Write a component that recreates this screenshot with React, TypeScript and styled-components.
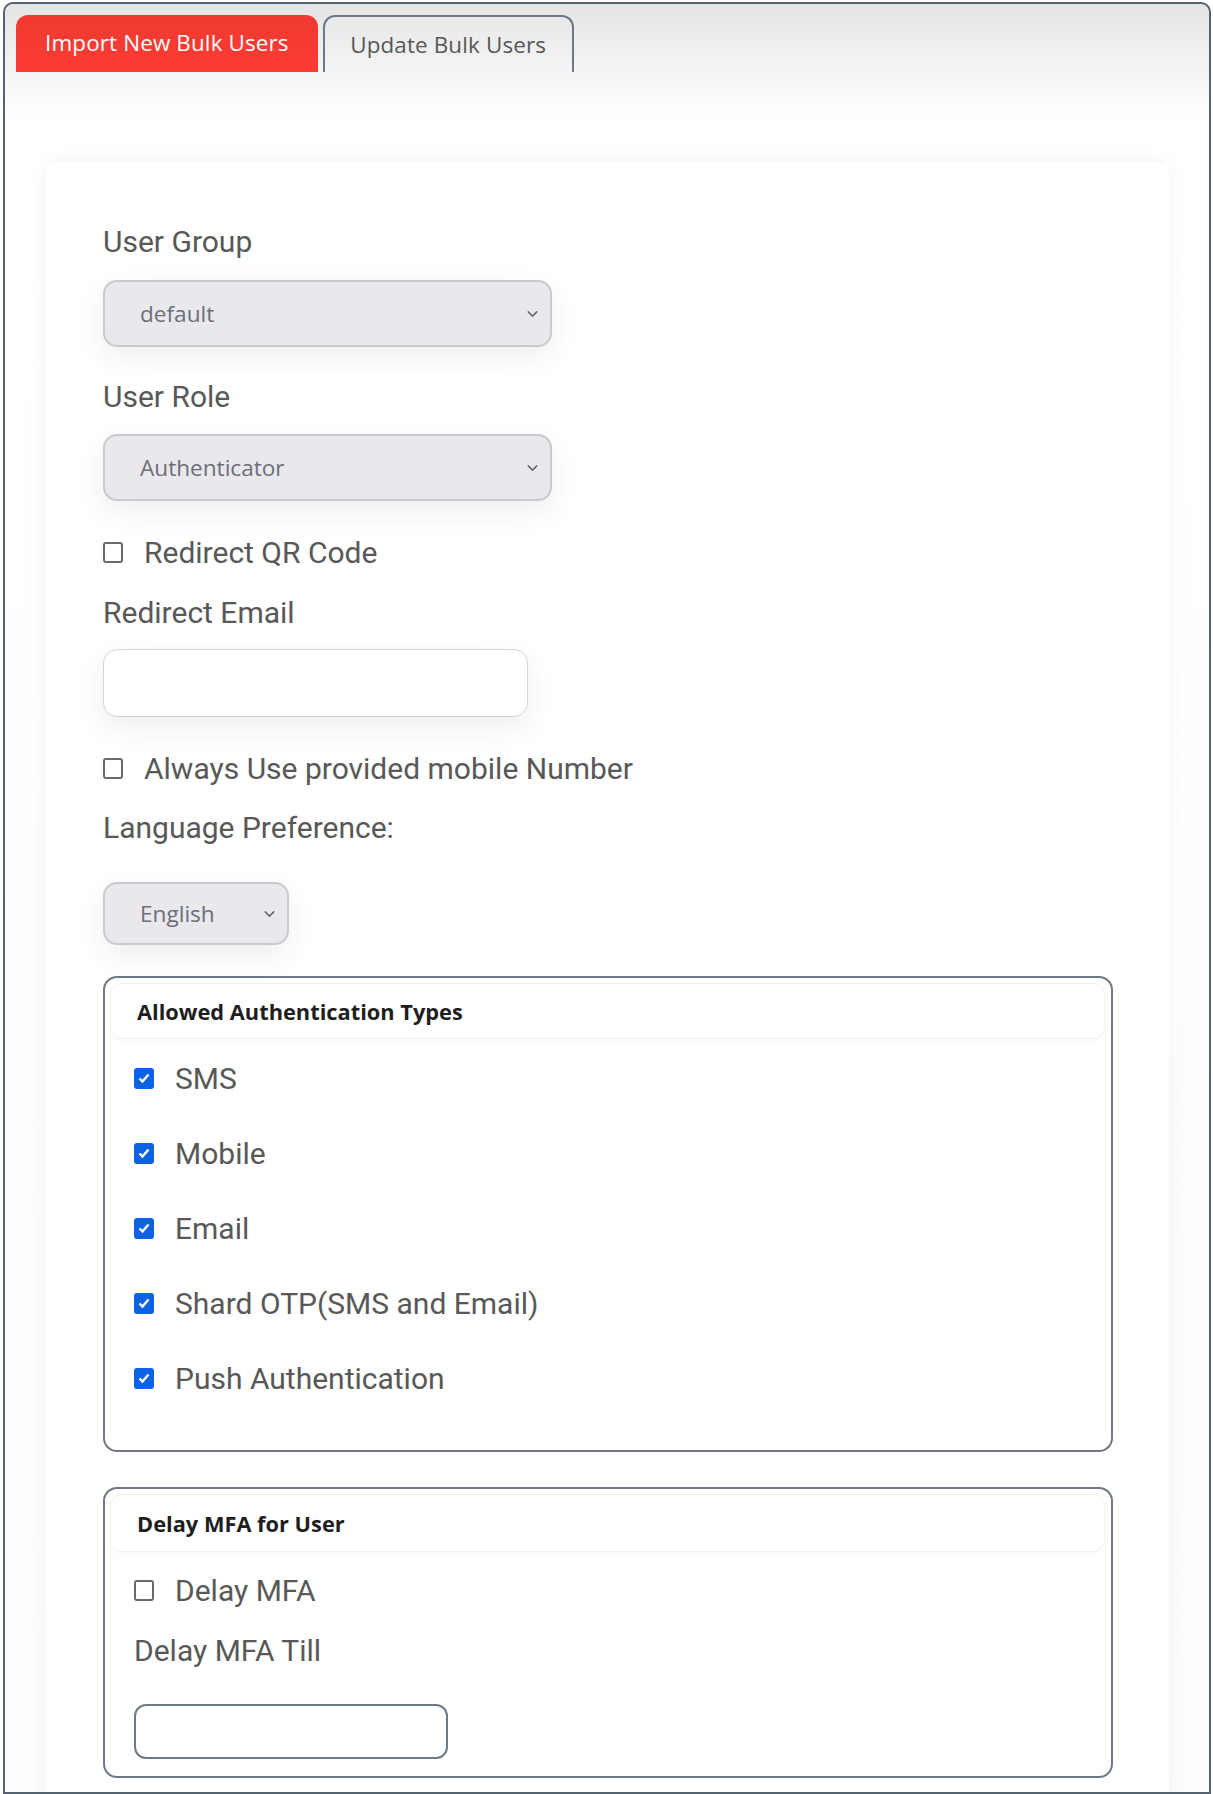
import React from 'react';
import styled, {createGlobalStyle} from 'styled-components';
import {ChevronDown} from 'lucide-react';

const GlobalStyle = createGlobalStyle`
  html, body {
    margin: 0;
    padding: 0;
    background: #ffffff;
  }
  * {
    box-sizing: border-box;
  }
`;

const Frame = styled.div`
  margin: 2px 2px 0 3px;
  height: 1792px;
  border: 2px solid #55626f;
  border-radius: 10px 10px 0 0;
  overflow: hidden;
  background: linear-gradient(#e5e5e5 0px, #ffffff 115px, #fdfdfd 100%);
`;

const TabBar = styled.div`
  display: flex;
  gap: 5px;
  padding: 11px 0 0 11px;
`;

const Tab = styled.div<{$active?: boolean}>`
  height: 57px;
  padding: 16px ${p => (p.$active ? '29px' : '25.5px')} 0;
  border-radius: 12px 12px 0 0;
  font-family: 'Open Sans', 'Liberation Sans', sans-serif;
  font-size: 22.4px;
  letter-spacing: 0.15px;
  line-height: 24px;
  white-space: nowrap;
  color: ${p => (p.$active ? '#ffffff' : '#575757')};
  background: ${p => (p.$active ? 'linear-gradient(#ef3a31, #fd3c33)' : 'transparent')};
  border: ${p => (p.$active ? 'none' : '2px solid #6f7985')};
  border-bottom: none;
`;

const Card = styled.div`
  margin: 90px 0 0 41px;
  width: 1123px;
  min-height: 1700px;
  padding: 62px 57px 0;
  background: #ffffff;
  border-radius: 14px;
  box-shadow: 0 0 22px rgba(0, 0, 0, 0.05);
  display: flex;
  flex-direction: column;
  align-items: flex-start;
`;

const Label = styled.div<{$mt?: number}>`
  margin-top: ${p => p.$mt ?? 0}px;
  font-family: Roboto, 'Liberation Sans', sans-serif;
  font-size: 30px;
  line-height: 36px;
  color: #585858;
`;

const SelectWrap = styled.div<{$mt?: number; $w: number; $h: number}>`
  position: relative;
  margin-top: ${p => p.$mt ?? 0}px;
  width: ${p => p.$w}px;
  height: ${p => p.$h}px;
  border-radius: 14px;
  box-shadow: 0 10px 30px rgba(0, 0, 0, 0.07);
`;

const Select = styled.select`
  appearance: none;
  width: 100%;
  height: 100%;
  padding: 0 40px 0 35px;
  background: #e8e8ed;
  border: 2px solid #c8cad0;
  border-radius: 14px;
  font-family: 'Open Sans', 'Liberation Sans', sans-serif;
  font-size: 22.6px;
  color: #6c6f78;
  outline: none;
`;

const Chevron = styled.span`
  position: absolute;
  right: 11px;
  top: 50%;
  transform: translateY(-50%);
  display: flex;
  color: #66676d;
  pointer-events: none;
`;

const TextInput = styled.input<{$mt?: number; $w: number; $h: number; $dark?: boolean}>`
  margin-top: ${p => p.$mt ?? 0}px;
  width: ${p => p.$w}px;
  height: ${p => p.$h}px;
  background: #ffffff;
  border: ${p => (p.$dark ? '2px solid #6f7985' : '1.5px solid #d3d5da')};
  border-radius: ${p => (p.$dark ? 12 : 14)}px;
  box-shadow: ${p => (p.$dark ? 'none' : '0 10px 30px rgba(0, 0, 0, 0.07)')};
  outline: none;
`;

const CheckRow = styled.div<{$mt?: number}>`
  margin-top: ${p => p.$mt ?? 0}px;
  display: flex;
  align-items: center;
  gap: 21px;
  height: 36px;
  font-family: Roboto, 'Liberation Sans', sans-serif;
  font-size: 30px;
  color: #585858;
`;

const Box = styled.span<{$checked?: boolean}>`
  width: 20px;
  height: 21px;
  flex: none;
  display: flex;
  align-items: center;
  justify-content: center;
  border-radius: 3px;
  border: 2px solid ${p => (p.$checked ? '#0b62e3' : '#6a6a6e')};
  background: ${p => (p.$checked ? '#0b62e3' : '#ffffff')};
`;

const Group = styled.div<{$mt: number; $pb: number}>`
  margin-top: ${p => p.$mt}px;
  width: 1010px;
  padding: 5px 6px ${p => p.$pb}px 5px;
  border: 2px solid #6f7985;
  border-radius: 14px;
  display: flex;
  flex-direction: column;
  align-items: flex-start;
`;

const GroupHead = styled.div<{$h: number}>`
  align-self: stretch;
  height: ${p => p.$h}px;
  margin-bottom: 2px;
  padding-left: 26px;
  display: flex;
  align-items: center;
  border: 1px solid #f1f1f1;
  border-radius: 12px;
  box-shadow: 0 2px 6px rgba(0, 0, 0, 0.025);
  font-family: 'Open Sans', 'Liberation Sans', sans-serif;
  font-weight: 700;
  font-size: 21.8px;
  color: #1e1e1e;
`;

const GroupBody = styled.div`
  padding-left: 24px;
  display: flex;
  flex-direction: column;
  align-items: flex-start;
`;

const Check = ({checked, label, mt}: {checked?: boolean; label: string; mt?: number}) => (
  <CheckRow $mt={mt}>
    <Box $checked={checked}>
      {checked && (
        <svg width="14" height="14" viewBox="0 0 14 14">
          <polyline points="2.5,7.5 5.5,10.5 11.5,3.5" fill="none" stroke="#fff" strokeWidth="2.4" />
        </svg>
      )}
    </Box>
    {label}
  </CheckRow>
);

const Dropdown = ({value, w, h, mt}: {value: string; w: number; h: number; mt?: number}) => (
  <SelectWrap $w={w} $h={h} $mt={mt}>
    <Select defaultValue={value}>
      <option value={value}>{value}</option>
    </Select>
    <Chevron>
      <ChevronDown size={17} strokeWidth={2} />
    </Chevron>
  </SelectWrap>
);

const authTypes = ['SMS', 'Mobile', 'Email', 'Shard OTP(SMS and Email)', 'Push Authentication'];

export default function App() {
  return (
    <>
      <GlobalStyle />
      <Frame>
        <TabBar>
          <Tab $active>Import New Bulk Users</Tab>
          <Tab>Update Bulk Users</Tab>
        </TabBar>
        <Card>
          <Label>User Group</Label>
          <Dropdown value="default" w={449} h={67} mt={20} />
          <Label $mt={32}>User Role</Label>
          <Dropdown value="Authenticator" w={449} h={67} mt={19} />
          <Check label="Redirect QR Code" mt={33} />
          <Label $mt={25}>Redirect Email</Label>
          <TextInput $w={425} $h={68} $mt={18} />
          <Check label="Always Use provided mobile Number" mt={33} />
          <Label $mt={24}>Language Preference:</Label>
          <Dropdown value="English" w={186} h={63} mt={36} />

          <Group $mt={31} $pb={54}>
            <GroupHead $h={56}>Allowed Authentication Types</GroupHead>
            <GroupBody>
              {authTypes.map((t, i) => (
                <Check key={t} checked label={t} mt={i === 0 ? 19 : 39} />
              ))}
            </GroupBody>
          </Group>

          <Group $mt={35} $pb={17}>
            <GroupHead $h={58}>Delay MFA for User</GroupHead>
            <GroupBody>
              <Check label="Delay MFA" mt={18} />
              <Label $mt={25}>Delay MFA Till</Label>
              <TextInput $w={314} $h={55} $mt={35} $dark />
            </GroupBody>
          </Group>
        </Card>
      </Frame>
    </>
  );
}
